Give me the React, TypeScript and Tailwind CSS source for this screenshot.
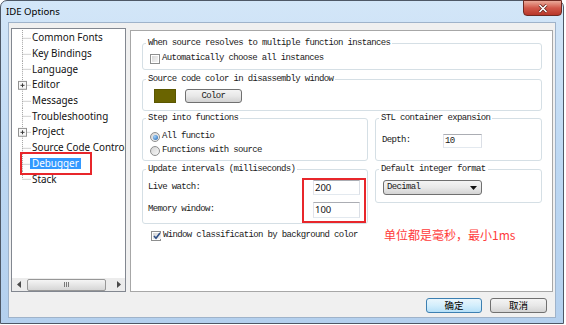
import React from "react";

const mono =
  "font-['Liberation_Mono',monospace] text-[9px] tracking-[-0.65px] text-[#1a1a1a]";
const sans = "font-['Noto_Sans',sans-serif]";

function Group({
  title,
  className = "",
  children,
}: {
  title: string;
  className?: string;
  children?: React.ReactNode;
}) {
  return (
    <fieldset
      className={`border border-[#d5dfe5] rounded-[3px] min-w-0 ${className}`}
    >
      <legend className={`ml-[3px] px-[2px] leading-[10px] ${mono}`}>
        {title}
      </legend>
      {children}
    </fieldset>
  );
}

function CheckBox({ checked = false }: { checked?: boolean }) {
  return (
    <span className="w-[10px] h-[10px] border border-[#8e8f8f] bg-white p-[1px] shrink-0 flex">
      <span className="flex-1 bg-gradient-to-br from-[#d6d6d6] to-[#f6f6f6] flex items-center justify-center">
        {checked && (
          <svg width="8" height="8" viewBox="0 0 8 8">
            <path
              d="M1 4 L3 6.3 L7 1"
              fill="none"
              stroke="#2f4f86"
              strokeWidth="1.6"
            />
          </svg>
        )}
      </span>
    </span>
  );
}

function Radio({ checked = false }: { checked?: boolean }) {
  return (
    <span className="w-[10px] h-[10px] rounded-full border border-[#8e8f8f] bg-gradient-to-br from-[#d4d4d4] to-[#f8f8f8] shrink-0 flex items-center justify-center">
      {checked && (
        <span className="w-[5px] h-[5px] rounded-full bg-[radial-gradient(circle_at_35%_35%,#9fd2ff,#1d5fa8)]" />
      )}
    </span>
  );
}

function TextInput({
  value,
  className = "",
  monoText = false,
}: {
  value: string;
  className?: string;
  monoText?: boolean;
}) {
  return (
    <div
      className={`bg-white border border-t-[#abadb3] border-l-[#e2e3ea] border-r-[#dbdfe6] border-b-[#e3e9ef] flex items-center pl-[1px] ${className}`}
    >
      <span
        className={
          monoText
            ? `${mono} leading-none`
            : `${sans} text-[9.5px] leading-none text-[#111]`
        }
      >
        {value}
      </span>
    </div>
  );
}

const treeItems: { label: string; plus?: boolean; sel?: boolean; last?: boolean }[] = [
  { label: "Common Fonts" },
  { label: "Key Bindings" },
  { label: "Language" },
  { label: "Editor", plus: true },
  { label: "Messages" },
  { label: "Troubleshooting" },
  { label: "Project", plus: true },
  { label: "Source Code Control" },
  { label: "Debugger", sel: true },
  { label: "Stack", last: true },
];

function TreeRow({
  label,
  plus,
  sel,
  last,
}: {
  label: string;
  plus?: boolean;
  sel?: boolean;
  last?: boolean;
}) {
  return (
    <div className="flex items-center h-[15.7px] whitespace-nowrap">
      <svg
        width="20"
        height="16"
        viewBox="0 0 20 16"
        className="shrink-0 h-full"
        preserveAspectRatio="none"
      >
        <line
          x1="10.5"
          y1="0"
          x2="10.5"
          y2={last ? 8 : 16}
          stroke="#a0a0a0"
          strokeDasharray="1 1"
        />
        <line
          x1="10.5"
          y1="8.5"
          x2="19"
          y2="8.5"
          stroke="#a0a0a0"
          strokeDasharray="1 1"
        />
        {plus && (
          <g>
            <rect x="6.5" y="4.5" width="8" height="8" fill="#f7f7f7" stroke="#919191" />
            <line x1="8.5" y1="8.5" x2="12.5" y2="8.5" stroke="#3a3a3a" />
            <line x1="10.5" y1="6.5" x2="10.5" y2="10.5" stroke="#3a3a3a" />
          </g>
        )}
      </svg>
      <span
        className={`${sans} text-[9.9px] leading-[11px] ${
          sel ? "bg-[#3399ff] text-white px-[2px] -ml-[2px]" : "text-[#111]"
        }`}
      >
        {label}
      </span>
    </div>
  );
}

export default function App() {
  return (
    <div className="w-[566px] h-[325px] bg-white">
      <div className="w-[564px] h-[324px] border border-[#4e5866] rounded-t-[7px] bg-gradient-to-b from-[#d3e6f8] via-[#bdd8f3] to-[#b4d0ee] flex flex-col">
        {/* Title bar */}
        <div className="h-[21px] flex items-start shrink-0">
          <span
            className={`${sans} text-[9.6px] text-black pl-[5px] pt-[4px] leading-[13px]`}
          >
            IDE Options
          </span>
          <div className="ml-auto mr-[1px] w-[39px] h-[16px] -mt-[1px] rounded-b-[4px] border border-[#6e2a22] bg-gradient-to-b from-[#e9a99a] via-[#d1584a] to-[#b8362a] flex items-center justify-center">
            <svg width="10" height="9" viewBox="0 0 10 9">
              <path d="M1.5 1 L8.5 8 M8.5 1 L1.5 8" stroke="#5a1e18" strokeWidth="3" />
              <path d="M1.5 1 L8.5 8 M8.5 1 L1.5 8" stroke="#ffffff" strokeWidth="1.6" />
            </svg>
          </div>
        </div>

        {/* Client area */}
        <div className="mx-[7px] h-[296px] border border-[#9fb3ca] bg-[#f0f0f0] flex flex-col pt-[5px] px-[2px] pb-[4px]">
          <div className="flex gap-[4px] h-[264px]">
            {/* Tree */}
            <div className="w-[115px] h-[264px] border border-[#828790] bg-white flex flex-col overflow-hidden relative">
              <div className="pt-[1px]">
                {treeItems.map((it) => (
                  <TreeRow key={it.label} {...it} />
                ))}
              </div>
              <div className="absolute left-[8px] top-[123px] w-[72px] h-[23px] border-2 border-[#e8262b]" />
              <div className="mt-auto h-[13px] bg-[#ececec] flex items-center">
                <div className="w-[13px] h-[13px] flex items-center justify-center">
                  <svg width="4" height="7" viewBox="0 0 4 7">
                    <path d="M4 0 L0 3.5 L4 7 Z" fill="#4a4a4a" />
                  </svg>
                </div>
                <div className="ml-[2px] w-[79px] h-[12px] rounded-[2px] border border-[#979797] bg-gradient-to-b from-[#f5f5f5] to-[#d6d6d6] flex items-center justify-center gap-[1px]">
                  <span className="w-[1px] h-[5px] bg-[#7a7a7a]" />
                  <span className="w-[1px] h-[5px] bg-[#7a7a7a]" />
                  <span className="w-[1px] h-[5px] bg-[#7a7a7a]" />
                </div>
                <div className="ml-auto w-[13px] h-[13px] flex items-center justify-center">
                  <svg width="4" height="7" viewBox="0 0 4 7">
                    <path d="M0 0 L4 3.5 L0 7 Z" fill="#4a4a4a" />
                  </svg>
                </div>
              </div>
            </div>

            {/* Right page */}
            <div className="w-[423px] h-[262px] mt-[2px] border border-[#a7a7a7] bg-white pl-[11px] pr-[10px] pt-[7px] flex flex-col">
              <Group
                title="When source resolves to multiple function instances"
                className="h-[32px]"
              >
                <div className="flex items-center gap-[2px] pl-[7px] pt-[5px] h-[17px]">
                  <CheckBox />
                  <span className={mono}>Automatically choose all instances</span>
                </div>
              </Group>

              <Group
                title="Source code color in disassembly window"
                className="h-[37px] mt-[4px]"
              >
                <div className="flex items-center pl-[11px] pt-[5px]">
                  <div className="w-[22px] h-[14px] bg-[#6a6400] border border-[#5a5600]" />
                  <div className="ml-[9px] w-[57px] h-[14px] rounded-[3px] border border-[#707070] bg-gradient-to-b from-[#f4f4f4] via-[#e8e8e8] to-[#d2d2d2] flex items-center justify-center">
                    <span className={`${mono} leading-none`}>Color</span>
                  </div>
                </div>
              </Group>

              <div className="flex gap-[7px] mt-[2px]">
                <div className="w-[226px] flex flex-col">
                  <Group title="Step into functions" className="h-[48px]">
                    <div className="flex flex-col gap-[2px] pl-[7px] pt-[8px]">
                      <div className="flex items-center gap-[2px] h-[12px]">
                        <Radio checked />
                        <span className={mono}>All functio</span>
                      </div>
                      <div className="flex items-center gap-[2px] h-[12px]">
                        <Radio />
                        <span className={mono}>Functions with source</span>
                      </div>
                    </div>
                  </Group>

                  <Group
                    title="Update intervals (milliseconds)"
                    className="h-[60px] mt-[3px]"
                  >
                    <div className="relative flex flex-col gap-[7px] pl-[5px] pt-[6px]">
                      <div className="flex items-center h-[15px]">
                        <span className={`${mono} w-[165px]`}>Live watch:</span>
                        <TextInput value="200" className="w-[47px] h-[15px]" />
                      </div>
                      <div className="flex items-center h-[16px]">
                        <span className={`${mono} w-[165px]`}>Memory window:</span>
                        <TextInput value="100" className="w-[47px] h-[16px]" />
                      </div>
                      <div className="absolute left-[159px] top-[4px] w-[64px] h-[45px] border-2 border-[#e8262b]" />
                    </div>
                  </Group>

                  <div className="flex items-center gap-[2px] pl-[9px] mt-[7px] h-[10px]">
                    <CheckBox checked />
                    <span className={mono}>
                      Window classification by background color
                    </span>
                  </div>
                </div>

                <div className="w-[167px] flex flex-col">
                  <Group title="STL container expansion" className="h-[48px]">
                    <div className="flex items-center pl-[6px] pt-[11px]">
                      <span className={`${mono} w-[61px]`}>Depth:</span>
                      <TextInput value="10" monoText className="w-[39px] h-[14px]" />
                    </div>
                  </Group>

                  <Group
                    title="Default integer format"
                    className="h-[39px] mt-[3px]"
                  >
                    <div className="pl-[7px] pt-[6px]">
                      <div className="w-[99px] h-[15px] rounded-[3px] border border-[#707070] bg-gradient-to-b from-[#f4f4f4] via-[#e9e9e9] to-[#d4d4d4] flex items-center pl-[3px] pr-[4px]">
                        <span className={`${mono} leading-none`}>Decimal</span>
                        <svg width="7" height="4" viewBox="0 0 7 4" className="ml-auto">
                          <path d="M0 0 L7 0 L3.5 4 Z" fill="#111" />
                        </svg>
                      </div>
                    </div>
                  </Group>

                  <div className="mt-[19px] pl-[9px]">
                    <span className="font-['Noto_Sans_CJK_SC',sans-serif] text-[12px] leading-[16px] text-[#ff3b3b] whitespace-nowrap">
                      单位都是毫秒，最小1ms
                    </span>
                  </div>
                </div>
              </div>
            </div>
          </div>

          {/* Buttons */}
          <div className="mt-[6px] h-[15px] flex justify-end gap-[8px] pr-[6px]">
            <div className="w-[56px] h-[15px] rounded-[3px] border border-[#3c7fb1] bg-gradient-to-b from-[#eaf6fd] via-[#d3eefc] to-[#b6e0f8] flex items-center justify-center">
              <span className="font-['Noto_Sans_CJK_SC',sans-serif] text-[9.5px] leading-none text-black">
                确定
              </span>
            </div>
            <div className="w-[57px] h-[15px] rounded-[3px] border border-[#707070] bg-gradient-to-b from-[#f4f4f4] via-[#e8e8e8] to-[#d3d3d3] flex items-center justify-center">
              <span className="font-['Noto_Sans_CJK_SC',sans-serif] text-[9.5px] leading-none text-black">
                取消
              </span>
            </div>
          </div>
        </div>
      </div>
    </div>
  );
}
